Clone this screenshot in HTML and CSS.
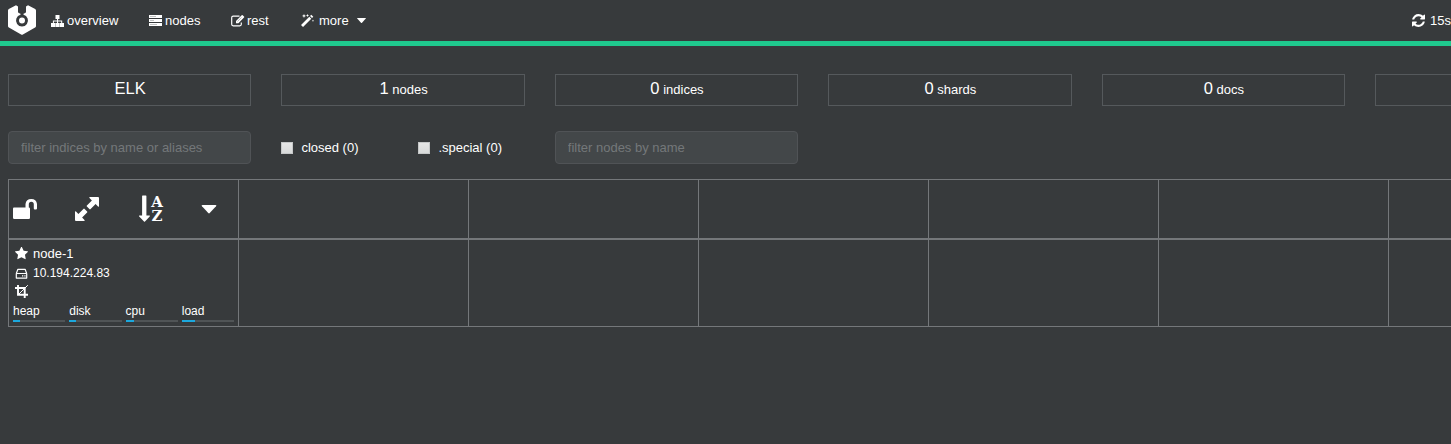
FILE: index.html
```html
<!DOCTYPE html>
<html lang="en">
<head>
<meta charset="utf-8">
<title>cerebro</title>
<link rel="stylesheet" href="styles.css">
</head>
<body>
<nav class="navbar">
  <svg class="logo" width="28" height="30" viewBox="0 0 28 30"><path fill-rule="evenodd" d="M8 .2.800 4Q0 4.500 0 5.500V21q0 1 .9 1.600l12.200 6.900q.9.500 1.800 0l12.200-6.900Q28 22 28 21V5.500q0-1-.8-1.500L20 .2 18 1.500v5.200q0 .8-.8 1.200l-1.700.9v.9a6 6 0 1 1-3 0v-.9l-1.700-.9Q10 7.500 10 6.700V1.500ZM14 12.500a3 3 0 1 0 0 6 3 3 0 0 0 0-6Z"/></svg>
  <a class="link overview"><svg width="13" height="12" viewBox="0 0 13 12"><path d="M4.500 0h4v4H7.100v1.400h4.100V8H13v4H8.900V8h1.300V6.400H7.100V8h1.500v4H4.500V8H6V6.400H2.900V8h1.300v4H0V8h1.900V5.400H6V4H4.500Z"/></svg>overview</a>
  <a class="link nodes"><svg width="13" height="11" viewBox="0 0 13 11"><path d="M0 0h13v3H0ZM0 4h13v3H0ZM0 8h13v3H0Z"/><path stroke="#a5a7a8" stroke-width=".7" d="M1 1.500h6M1 5.500h4M1 9.500h7"/></svg>nodes</a>
  <a class="link rest"><svg width="14" height="12" viewBox="0 0 14 12"><path fill="none" stroke="#fff" stroke-width="1.200" d="M8.500 1.200H2.200Q.7 1.200.7 2.700v6.600q0 1.500 1.500 1.500h6.600q1.500 0 1.500-1.500V7.500"/><path d="m5 6 5.700-5.700q.5-.5 1 0l1.300 1.300q.5.500 0 1L7.400 8.300H5Z"/><path stroke="#777" stroke-width=".5" d="m6.500 6.500 4-4"/></svg>rest</a>
  <a class="link more"><svg width="13" height="13" viewBox="0 0 13 13"><path d="m0 11 8.300-8.300 2 2L2 13ZM9 2l1.300-1.300 2 2L11 4ZM3 0l.6 1.300L5 2l-1.400.6L3 4l-.6-1.400L1 2l1.400-.7ZM6.500 0 7 1l1 .5-1 .5-.5 1-.5-1-1-.5L6 1ZM12 5.500l.4.900.6.300-.6.400-.4.900-.4-.9-.8-.4.800-.3Z"/></svg>more<svg class="caret" width="9" height="5" viewBox="0 0 9 5"><path d="M.5 0h8q.7 0 .3.600L5 4.700q-.5.500-1 0L.2.600Q-.2 0 .5 0Z"/></svg></a>
  <a class="link refresh"><svg width="13" height="13" viewBox="128 128 1536 1536"><path d="M1639 1056q0 5-1 7-64 268-268 434.500t-478 166.500q-146 0-282.500-55t-243.500-157l-129 129q-19 19-45 19t-45-19-19-45v-448q0-26 19-45t45-19h448q26 0 45 19t19 45-19 45l-137 137q71 66 161 102t187 36q134 0 250-65t186-179q11-17 53-117 8-23 30-23h192q13 0 22.500 9.500t9.500 22.500zm25-800v448q0 26-19 45t-45 19h-448q-26 0-45-19t-19-45 19-45l138-138q-148-137-349-137-134 0-250 65t-186 179q-11 17-53 117-8 23-30 23h-199q-13 0-22.500-9.500t-9.500-22.500v-7q65-268 270-434.500t480-166.500q146 0 284 55.500t245 156.500l130-129q19-19 45-19t45 19 19 45z"/></svg>15sec</a>
</nav>
<main class="content">
  <section class="stats">
    <div class="stat"><b>ELK</b></div>
    <div class="stat"><b>1</b> nodes</div>
    <div class="stat"><b>0</b> indices</div>
    <div class="stat"><b>0</b> shards</div>
    <div class="stat"><b>0</b> docs</div>
    <div class="stat"></div>
  </section>
  <section class="filters">
    <input class="filter" type="text" placeholder="filter indices by name or aliases">
    <div class="checks">
      <label class="check"><input type="checkbox">closed (0)</label>
      <label class="check"><input type="checkbox">.special (0)</label>
    </div>
    <input class="filter" type="text" placeholder="filter nodes by name">
  </section>
  <section class="grid">
    <div class="cell head tools">
      <svg class="lock" width="24" height="21" viewBox="0 0 24 21"><path d="M1 9.500h11.500V6a5.800 5.800 0 0 1 11.500 0v4.500q0 1-1 1h-1.200q-1 0-1-1V6.200a2.500 2.500 0 0 0-5 0v3.300q1.200 0 1.200 1.200v9q0 1.300-1.300 1.300H1.300Q0 21 0 19.700v-9q0-1.200 1-1.200Z"/></svg>
      <svg width="24" height="24" viewBox="0 0 24 24"><path d="M15 0h8q1 0 1 1v8q0 1.300-1 .5l-2.400-2.400-5 5q-.6.600-1.200 0l-2.500-2.500q-.6-.6 0-1.200l5-5L14.500 1Q13.700 0 15 0ZM9 24H1q-1 0-1-1v-8q0-1.300 1-.5l2.400 2.400 5-5q.6-.6 1.200 0l2.500 2.500q.6.600 0 1.200l-5 5L9.500 23q.8 1-.5 1Z"/></svg>
      <div class="sort"><svg width="11" height="27" viewBox="0 0 11 27"><path d="M3.600.500h3.300q.5 0 .5.500v19.500h3q1 0 .3.900L6 26.500q-.5.500-1 0L.2 21.400q-.6-.9.300-.9h2.600V1q0-.5.500-.5Z"/></svg><div class="letters"><span>A</span><span>Z</span></div></div>
      <svg width="16" height="9" viewBox="0 0 17 10"><path d="M1.500 0h14q2 0 .8 1.500L9.300 9q-.8.800-1.600 0L.7 1.500Q-.5 0 1.500 0Z"/></svg>
    </div>
    <div class="cell head"></div><div class="cell head"></div><div class="cell head"></div><div class="cell head"></div><div class="cell head"></div><div class="cell head"></div>
    <div class="cell node">
      <div class="line"><svg width="13" height="13" viewBox="64 96 1664 1600"><path d="M1728 647q0 22-26 48l-363 354 86 500q1 7 1 20 0 21-10.500 35.500t-30.500 14.500q-19 0-40-12l-449-236-449 236q-22 12-40 12-21 0-31.500-14.500t-10.500-35.500q0-6 2-20l86-500-364-354q-25-27-25-48 0-37 56-46l502-73 225-455q19-41 49-41t49 41l225 455 502 73q56 9 56 46z"/></svg>node-1</div>
      <div class="line ip"><svg width="13" height="13" viewBox="0 0 13 13"><path fill="none" stroke="#fff" stroke-width="1.200" stroke-linejoin="round" d="M1.300 6.500h10.400v4.600H1.300ZM1.300 6.500l1.600-4.200h7.200l1.600 4.200M7 8.900h1.300M9.300 8.900h1.300"/></svg>10.194.224.83</div>
      <div class="line"><svg width="13" height="13" viewBox="0 0 13 13"><path fill="none" stroke="#fff" stroke-width="1.900" d="M3 0v9.700h10M0 3h9.700v10"/><path stroke="#fff" stroke-width="1" d="m3 10 9.800-9.800"/></svg></div>
      <div class="meters">
        <div class="meter">heap<div class="track"><div class="fill" style="width:7px"></div></div></div>
        <div class="meter">disk<div class="track"><div class="fill" style="width:7px"></div></div></div>
        <div class="meter">cpu<div class="track"><div class="fill" style="width:8px"></div></div></div>
        <div class="meter">load<div class="track"><div class="fill" style="width:13px"></div></div></div>
      </div>
    </div>
    <div class="cell"></div><div class="cell"></div><div class="cell"></div><div class="cell"></div><div class="cell"></div><div class="cell"></div>
  </section>
</main>
</body>
</html>
```

FILE: styles.css
```css
* { box-sizing: border-box; }
body {
  margin: 0;
  height: 444px;
  overflow: hidden;
  background: #373a3c;
  color: #fff;
  font: 13px/19px "Liberation Sans", Arial, sans-serif;
}
svg { display: block; flex: none; fill: #fff; }
.navbar {
  display: flex;
  align-items: center;
  height: 46px;
  padding-left: 8px;
  border-bottom: 5px solid #1fc98e;
}
.logo { margin-top: -1px; }
.link { display: flex; align-items: center; gap: 3px; white-space: nowrap; }
.overview { margin-left: 15px; width: 98px; }
.nodes { width: 82px; }
.rest { width: 70px; gap: 2px; }
.more { gap: 5px; width: 70px; }
.caret { margin-left: 3px; }
.refresh { margin-left: auto; width: 39px; gap: 5px; flex: none; }
.content { padding: 28px 0 0 8px; overflow: hidden; }
.stats, .filters {
  display: grid;
  grid-template-columns: repeat(6, 243.400px);
  column-gap: 30px;
}
.stat {
  height: 32px;
  padding-left: 1px;
  border: 1px solid #55595c;
  line-height: 27px;
  text-align: center;
}
.stat b { font-size: 16.500px; font-weight: normal; }
.filters { margin-top: 25px; }
.filter {
  width: 100%;
  height: 33px;
  padding: 0 12px;
  border: 1px solid #505356;
  border-radius: 4px;
  background: #434749;
  color: #fff;
  font: inherit;
}
.filter::placeholder { color: #74787a; opacity: 1; }
.checks { display: grid; grid-template-columns: 137px 1fr; align-items: center; }
.check { display: flex; align-items: center; gap: 8px; }
.check input {
  appearance: none;
  width: 12px;
  height: 12px;
  margin: 1px 0 0;
  border: 1px solid #c5c7c8;
  background: linear-gradient(#e6e6e6, #d8dada);
}
.grid {
  display: grid;
  grid-template-columns: repeat(7, 230px);
  grid-template-rows: 61px 87px;
  width: max-content;
  margin-top: 15px;
  border-left: 1px solid #74777a;
}
.cell { border-right: 1px solid #74777a; border-bottom: 1px solid #74777a; }
.head { border-top: 1px solid #74777a; border-bottom-width: 2px; }
.tools { display: flex; align-items: center; padding-left: 4px; gap: 38px; }
.lock { margin-bottom: 2px; }
.sort { display: flex; gap: 1px; width: 24px; margin-left: 2px; }
.letters {
  display: flex;
  flex-direction: column;
  width: 12px;
  font: bold 15px/14px "DejaVu Serif", serif;
}
.letters span { display: flex; justify-content: center; height: 14px; }
.node { padding: 4px 4px 0; }
.line { display: flex; align-items: center; gap: 5px; height: 19px; padding-left: 2px; }
.ip { font-size: 12px; padding-top: 1px; }
.meters {
  display: grid;
  grid-template-columns: repeat(4, 1fr);
  column-gap: 4px;
  padding-top: 1px;
  font-size: 12px;
  line-height: 19px;
}
.track { height: 2px; margin-top: -1px; background: #505456; }
.fill { height: 2px; background: #1ca8dd; }
```
